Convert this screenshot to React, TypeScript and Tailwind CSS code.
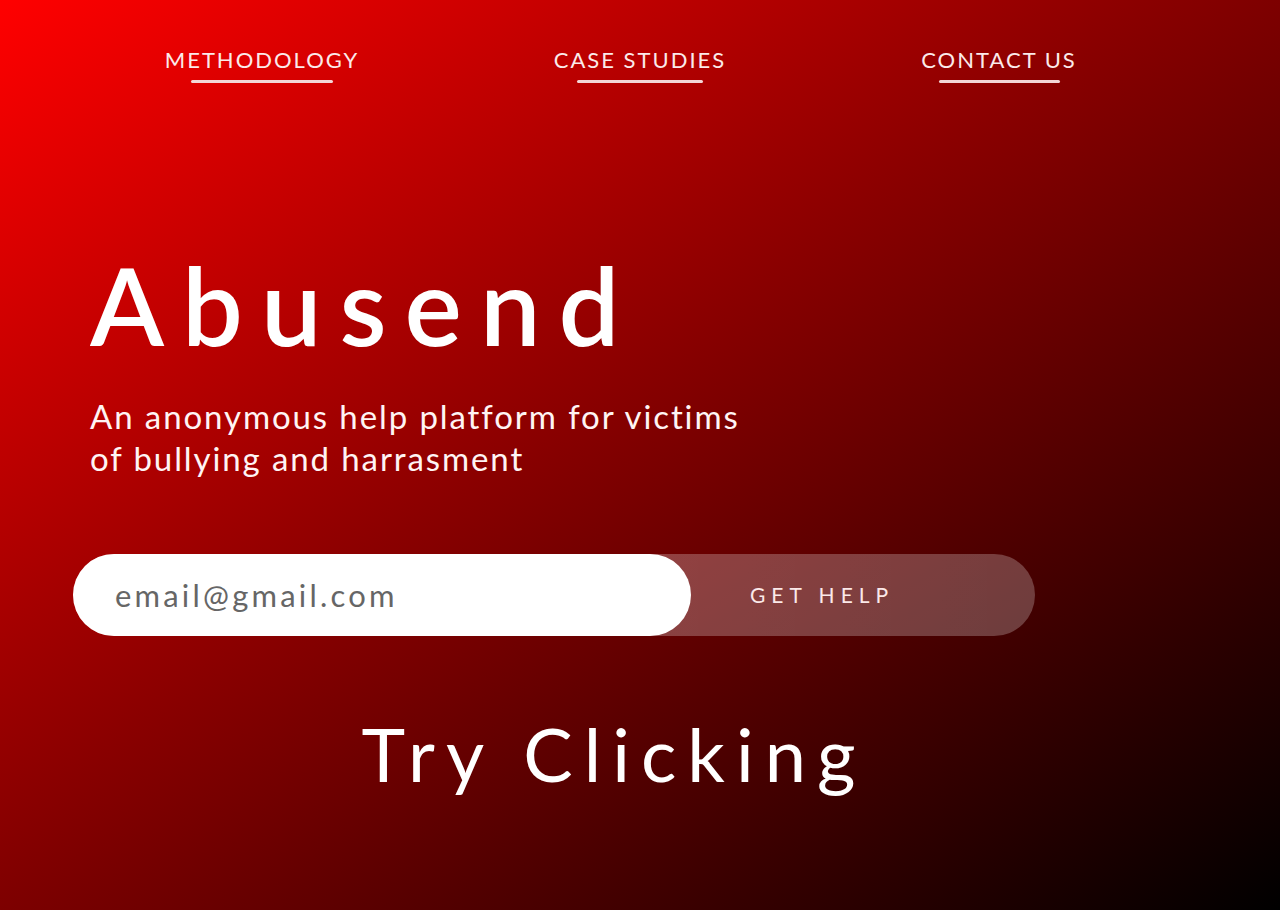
import React from "react";

const navItems = [
    { label: "METHODOLOGY", line: "w-[142px]" },
    { label: "CASE STUDIES", line: "w-[126px]" },
    { label: "CONTACT US", line: "w-[121px]" },
];

const NavLink = ({ label, line }: { label: string; line: string }) => (
    <a href="#" className="flex w-[300px] flex-col items-center">
        <span className="text-[22px] leading-none tracking-[2px] text-[#fbeaea]">
            {label}
        </span>
        <span className={`mt-[9px] h-[3px] rounded-full bg-[#f3d6d6] ${line}`} />
    </a>
);

export default function App() {
    return (
        <div
            className="h-[910px] w-[1280px] overflow-hidden bg-[linear-gradient(to_bottom_right,#ff0000_0%,#8a0000_45%,#000000_100%)] text-white"
            style={{ fontFamily: "Lato, 'Noto Sans', sans-serif" }}
        >
            <nav className="flex pt-[49px] pl-[112px]">
                <NavLink {...navItems[0]} />
                <div className="w-[78px]" />
                <NavLink {...navItems[1]} />
                <div className="w-[59px]" />
                <NavLink {...navItems[2]} />
            </nav>

            <div className="pl-[90px] pt-[167px]">
                <h1 className="text-[108px] font-semibold leading-none tracking-[18px]">
                    Abusend
                </h1>
                <p className="mt-[37px] text-[33px] leading-[42px] tracking-[1.9px] text-[#fff4f4]">
                    An anonymous help platform for victims
                    <br />
                    of bullying and harrasment
                </p>
            </div>

            <div className="ml-[73px] mt-[75px] flex h-[82px] w-[962px] items-center rounded-full bg-[linear-gradient(to_right,rgba(255,255,255,0.28),rgba(255,255,255,0.24))]">
                <div className="flex h-full w-[618px] items-center rounded-full bg-white pl-[42px]">
                    <span className="text-[31px] tracking-[3.2px] text-[#666666]">
                        email@gmail.com
                    </span>
                </div>
                <button className="ml-[59px] text-[21px] tracking-[6px] text-[#fbe9e9]">
                    GET HELP
                </button>
            </div>

            <div className="mt-[81px] flex justify-center pr-[52px]">
                <span className="text-[74px] leading-none tracking-[11px]">
                    Try Clicking
                </span>
            </div>
        </div>
    );
}
